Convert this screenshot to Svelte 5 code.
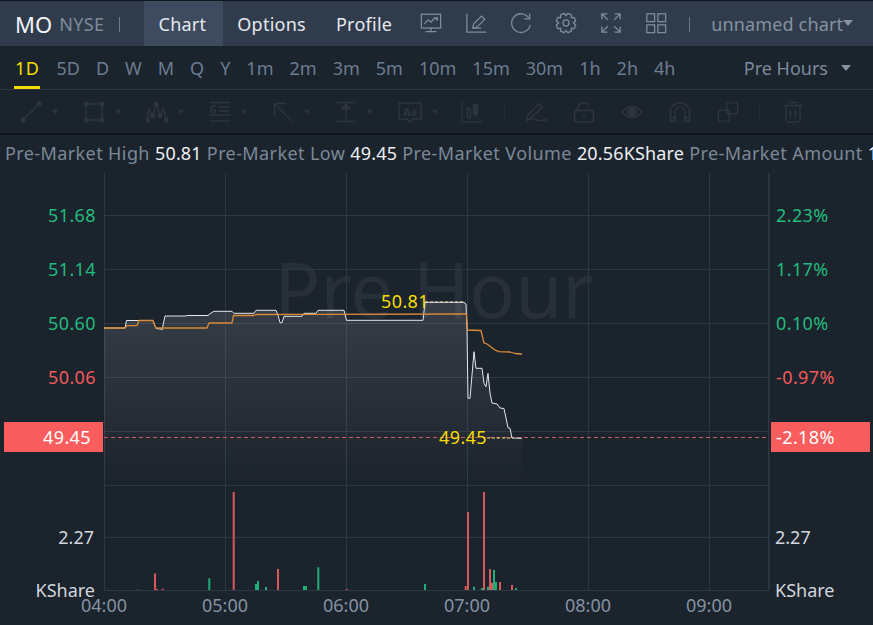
<script>
  const intervals = ['1D','5D','D','W','M','Q','Y','1m','2m','3m','5m','10m','15m','30m','1h','2h','4h'];

  const stats = [
    ['Pre-Market High', '50.81'],
    ['Pre-Market Low', '49.45'],
    ['Pre-Market Volume', '20.56KShare'],
    ['Pre-Market Amount', '1.03M']
  ];

  const priceAxis = [
    { y: 215, price: '51.68', pct: '2.23%', cls: 'up' },
    { y: 269, price: '51.14', pct: '1.17%', cls: 'up' },
    { y: 323, price: '50.60', pct: '0.10%', cls: 'up' },
    { y: 377, price: '50.06', pct: '-0.97%', cls: 'down' }
  ];

  const gridY = [215, 269, 323, 377, 431, 485, 537, 590];
  const times = [[104,'04:00'],[225,'05:00'],[346,'06:00'],[467,'07:00'],[588,'08:00'],[709,'09:00']];

  // traced from the session: [x, y]
  const last = [
    [104,328],[125,328],[126.5,320.5],[138,320.5],[153,320.5],[155,326],[156,328.5],[161,329],[162,330],
    [165,316],[186,316],[186.5,315.5],[208,315.5],[211,313],[214,311.3],[232,311.3],[234,313.3],[254,313.3],
    [256,310.3],[276,310.3],[278,315],[280,322.7],[282,322.7],[284,316.3],[302,316.3],[304,313.3],[316,313.3],
    [318,310.3],[344,310.3],[346.5,320.3],[423,320.3],[425,302.3],[464,302.3],[466,304],[467,330],[468,398.3],
    [470,398.3],[474,351.7],[476,368.3],[482,368.3],[484,383.3],[486,386.7],[488,373.3],[490,393],[492,403],
    [497,404],[500,408],[504,408.5],[508,427.7],[510,428.3],[512,438],[522,438.3]
  ];
  const avg = [
    [104,328],[125,328],[127,325.6],[137,325.6],[139,320.5],[153,320.5],[155,326],[156,328],[207,328],[209,323],
    [232,323],[233.5,315.5],[254,315.5],[256,314.5],[316,314.3],[465,314],[466.5,314],[467.5,330],[481,330.5],
    [484,343],[487,344],[495,350],[499,351.7],[510,352],[515,353.5],[522,354]
  ];
  const toPoints = (pts) => pts.map((p) => p.join(',')).join(' ');
  const areaPoints = toPoints(last) + ' 522,485 104,485';

  const bars = [
    [138,589,'flat'],[155,573.3,'r'],[157,589,'r'],[162.7,588.7,'r'],[209.3,578.3,'g'],[233.7,492,'r'],[256,584,'g'],
    [258,581,'g'],[266,587,'g'],[278,569,'r'],[304,586,'g'],[306,586,'g'],[318.3,567.3,'g'],[346.7,589,'r'],
    [425,584,'g'],[465.7,586,'r'],[468,512,'r'],[474,586.7,'g'],[482,588,'g'],[484,492,'r'],[488,586.7,'g'],
    [490,569,'r'],[492,582.7,'r'],[494,570,'g'],[496,582,'g'],[500,582,'r'],[512,585,'r'],[516,588,'g']
  ];

  // eight-tooth gear outline for the settings button
  const gear = Array.from({ length: 8 }, (_, i) => {
    const a = (i * Math.PI) / 4 + Math.PI / 8;
    const at = (r, d) => `${(12 + r * Math.cos(a + d)).toFixed(2)},${(12 + r * Math.sin(a + d)).toFixed(2)}`;
    return [at(8.2, -0.38), at(10.8, -0.2), at(10.8, 0.2), at(8.2, 0.38)].join(' ');
  }).join(' ');
</script>

<div class="page">
  <header class="topbar">
    <span class="symbol">MO</span>
    <span class="exchange">NYSE</span>
    <i class="sep first"></i>
    <nav class="tabs">
      <span class="tab active">Chart</span>
      <span class="tab">Options</span>
      <span class="tab">Profile</span>
    </nav>
    <div class="actions">
      <svg viewBox="0 0 24 24"><rect x="1.5" y="2.5" width="21" height="15"/><path d="M4.5 13l4.5-4.5 3 2.5 4-4.5 3 2M12 17.5v4M6 21.5h12M15 6.5h4v3"/></svg>
      <svg viewBox="0 0 24 24"><path d="M2 2v20h21M8.5 17.5l1-4.5L18 4.5l3.5 3.5-8.5 8.5zM8.5 17.5h9"/></svg>
      <svg viewBox="0 0 24 24"><path d="M20.5 6.5A10.2 10.2 0 1 0 22 14M21.5 1.5v6h-6"/></svg>
      <svg viewBox="0 0 24 24"><polygon points={gear}/><circle cx="12" cy="12" r="3.3"/></svg>
      <svg viewBox="0 0 24 24"><path d="M2 8V2h6M2 2l6.5 6.5M16 2h6v6M22 2l-6.5 6.5M2 16v6h6M2 22l6.5-6.5M22 16v6h-6M22 22l-6.5-6.5"/></svg>
      <svg viewBox="0 0 24 24"><rect x="2" y="2" width="8.5" height="8.5"/><rect x="14" y="2" width="8.5" height="8.5"/><rect x="2" y="14" width="8.5" height="8.5"/><rect x="14" y="14" width="8.5" height="8.5"/></svg>
    </div>
    <i class="sep"></i>
    <span class="chart-name">unnamed chart</span>
    <i class="caret light"></i>
  </header>

  <div class="intervals">
    {#each intervals as item, i}
      <span class="interval" class:selected={i === 0}>{item}</span>
    {/each}
    <span class="session">Pre Hours</span>
    <i class="caret session-caret"></i>
  </div>

  <div class="tools">
    <div class="tool"><svg viewBox="0 0 22 22"><path d="M3 19L19 3"/><circle cx="3" cy="19" r="1.8"/><circle cx="19" cy="3" r="1.8"/></svg><i class="caret small"></i></div>
    <div class="tool"><svg viewBox="0 0 22 22"><rect x="3" y="3" width="16" height="16"/><circle cx="3" cy="3" r="1.8"/><circle cx="19" cy="3" r="1.8"/><circle cx="3" cy="19" r="1.8"/><circle cx="19" cy="19" r="1.8"/></svg><i class="caret small"></i></div>
    <div class="tool"><svg viewBox="0 0 22 22"><path d="M1 19L3 8l3.7 6.5L10.3 3 14 14.5 17.7 8 20.3 19"/><circle cx="1.5" cy="19" r="1.8"/><circle cx="6.7" cy="14.5" r="1.8"/><circle cx="10.3" cy="3" r="1.8"/><circle cx="14" cy="14.5" r="1.8"/><circle cx="20.3" cy="19" r="1.8"/></svg><i class="caret small"></i></div>
    <div class="tool"><svg viewBox="0 0 22 22"><path d="M0.5 1.5h21M10 6h11M10 10h11M0.5 14h21M0.5 20h21"/><text x="0.5" y="12" class="tool-glyph">G</text></svg><i class="caret small"></i></div>
    <div class="tool"><svg viewBox="0 0 22 22"><path d="M2.5 2.5L20 20M2.5 2.5h12M2.5 2.5v12"/></svg><i class="caret small"></i></div>
    <div class="tool"><svg viewBox="0 0 22 22"><path d="M1.5 1.5h19M1.5 20.5h19M11 4v16"/><path class="solid" d="M11 3.5l4 4H7z"/></svg><i class="caret small"></i></div>
    <div class="tool"><svg class="wide" viewBox="0 0 24 22"><path d="M1 2h22v16h-8l-3 3-3-3H1z"/><text x="12" y="14.5" class="tool-glyph aa">Aa</text></svg><i class="caret small"></i></div>
    <div class="tool candle"><svg viewBox="0 0 22 22"><path d="M1 1v20h20"/><rect x="6" y="8" width="3.5" height="8"/><path d="M7.75 6v2M7.75 16v2M14.5 2v14"/><rect class="solid" x="12.5" y="4" width="4" height="9"/></svg></div>
    <i class="tool-sep"></i>
    <div class="tool-group">
      <svg viewBox="0 0 22 22"><path d="M2 15L14 2.5l3.5 3.5L5 18H2zM1 20c4-2 5-2.5 8-1.5s6 1.5 10 .5 1 1 2 1.5"/></svg>
      <svg viewBox="0 0 22 22"><rect x="1.5" y="9.5" width="19" height="11.5" rx="2.5"/><path d="M5 9.5V6.5a6 5 0 0 1 11-2.500M11 13.500v3"/></svg>
      <svg viewBox="0 0 24 22"><path d="M1 11c6-8 16-8 22 0-6 8-16 8-22 0z"/><circle class="solid" cx="12" cy="11" r="4.5"/></svg>
      <svg viewBox="0 0 22 22"><path d="M1.5 20.5V11a9.500 9.500 0 0 1 19 0v9.500h-4.500V11a5 5 0 0 0-10 0v9.500zM1.500 16.500H6M16 16.500h4.500"/></svg>
      <svg viewBox="0 0 24 22"><rect x="10.5" y="1" width="12" height="12" rx="2"/><rect x="1.5" y="9" width="12" height="12" rx="2"/></svg>
    </div>
    <i class="tool-sep last"></i>
    <svg class="trash" viewBox="0 0 22 22"><path d="M1 4.5h20M7 1.5h8M4 4.5v14a2.5 2.5 0 0 0 2.5 2.5h9a2.5 2.5 0 0 0 2.5-2.5v-14M8.5 9v7.5M13.5 9v7.5"/></svg>
  </div>

  <div class="stats">
    {#each stats as [label, value]}
      <span class="stat-label">{label}</span>{' '}<span class="stat-value">{value}</span>{' '}
    {/each}
  </div>

  <svg class="chart" viewBox="0 173 873 452">
    <defs>
      <linearGradient id="fade" x1="0" y1="0" x2="0" y2="1">
        <stop offset="0" stop-color="#fff" stop-opacity="0.12"/>
        <stop offset="1" stop-color="#fff" stop-opacity="0"/>
      </linearGradient>
    </defs>

    <text class="watermark" x="434" y="318" text-anchor="middle">Pre Hour</text>

    {#each gridY as y}
      <line class="grid" x1="104" x2="769" y1={y + 0.5} y2={y + 0.5}/>
    {/each}
    {#each times as [x]}
      <line class="grid" x1={x + 0.5} x2={x + 0.5} y1="173" y2="590"/>
    {/each}
    <line class="grid edge" x1="768.75" x2="768.75" y1="173" y2="590"/>

    <polygon points={areaPoints} fill="url(#fade)"/>
    <line class="limit" x1="104" x2="769" y1="437.5" y2="437.5"/>
    <line class="hi-lo" x1="425" x2="465" y1="302" y2="302"/>
    <polyline class="last" points={toPoints(last)}/>
    <polyline class="avg" points={toPoints(avg)}/>
    <line class="hi-lo" x1="487" x2="512" y1="438" y2="438"/>

    <text class="mark" x="381" y="308">50.81</text>
    <text class="mark" x="439" y="444">49.45</text>

    {#each bars as [x, top, kind]}
      <rect class="bar {kind}" x={x - 1} y={top} width="2" height={590 - top}/>
    {/each}

    {#each priceAxis as row}
      <text class="axis {row.cls}" x="96" y={row.y + 6.5} text-anchor="end">{row.price}</text>
      <text class="axis {row.cls}" x="776" y={row.y + 6.5}>{row.pct}</text>
    {/each}

    <rect class="flag" x="4" y="422" width="99" height="30"/>
    <text class="axis white" x="91" y="443.5" text-anchor="end">49.45</text>
    <rect class="flag" x="771" y="422" width="99" height="30"/>
    <text class="axis white" x="776" y="443.5">-2.18%</text>

    <text class="axis plain" x="94" y="543.5" text-anchor="end">2.27</text>
    <text class="axis plain" x="775" y="543.5">2.27</text>
    <text class="axis plain" x="95" y="596.5" text-anchor="end">KShare</text>
    <text class="axis plain" x="775" y="596.5">KShare</text>

    {#each times as [x, label]}
      <text class="time" {x} y="611.5" text-anchor="middle">{label}</text>
    {/each}
  </svg>
</div>

<style>
  :global(body) {
    margin: 0;
    background: #1b232d;
  }

  .page {
    width: 873px;
    height: 625px;
    overflow: hidden;
    background: #1b232d;
    font-family: "Noto Sans", "Open Sans", sans-serif;
    font-size: 18px;
  }

  .topbar {
    display: flex;
    align-items: center;
    height: 45px;
    border-top: 1px solid #12171d;
    background: #303c4c;
    padding-left: 15px;
  }

  .symbol {
    color: #f2f4f7;
    font-size: 22px;
  }

  .exchange {
    margin-left: 7px;
    color: #7e8a9a;
    letter-spacing: 0.4px;
  }

  .sep {
    width: 1px;
    height: 15px;
    margin: 2px 21px 0 22px;
    background: #6f7a8a;
  }

  .sep.first {
    margin: 2px 24px 0 14px;
  }

  .tabs {
    display: flex;
    align-self: stretch;
  }

  .tab {
    display: flex;
    align-items: center;
    padding: 0 15px;
    color: #e6e9ee;
    letter-spacing: 0.25px;
  }

  .tab.active {
    background: #3e4b5e;
    padding: 0 17px 0 15px;
    margin-right: -1px;
  }

  .actions {
    display: flex;
    gap: 23px;
    margin-left: 13px;
    margin-top: -1px;
  }

  .actions svg {
    width: 22px;
    height: 22px;
    fill: none;
    stroke: #7f8b9a;
    stroke-width: 1.4;
  }

  .chart-name {
    color: #8591a1;
    letter-spacing: 0.15px;
  }

  .caret {
    width: 0;
    height: 0;
    border-left: 5px solid transparent;
    border-right: 5px solid transparent;
    border-top: 6px solid #8591a1;
  }

  .caret.light {
    margin: -2px 0 0 0;
  }

  .caret.small {
    border-left-width: 3.5px;
    border-right-width: 3.5px;
    border-top: 4px solid #2d3540;
    margin-left: 10px;
  }

  .intervals {
    display: flex;
    align-items: center;
    gap: 16px;
    height: 43px;
    padding-left: 15px;
    border-bottom: 1px solid #2e3743;
    color: #6c7c91;
    box-sizing: content-box;
  }

  .interval {
    position: relative;
  }

  .interval.selected {
    color: #f5dc00;
    margin-right: 1px;
    letter-spacing: 0.5px;
  }

  .interval.selected::after {
    content: "";
    position: absolute;
    left: -1px;
    right: -1px;
    bottom: -9px;
    height: 3px;
    background: #f5dc00;
  }

  .session {
    margin-left: auto;
    color: #7c8a9c;
  }

  .session-caret {
    margin: 0 22px 0 -3px;
    border-top-color: #8591a1;
  }

  .tools {
    display: flex;
    align-items: center;
    height: 43px;
    padding-left: 20px;
    border-bottom: 2px solid #11161c;
  }

  .tool {
    display: flex;
    align-items: center;
    width: 63px;
  }

  .tools svg {
    width: 22px;
    height: 22px;
    flex: none;
    fill: none;
    stroke: #2d3540;
    stroke-width: 1.5;
  }

  .tools svg.wide {
    width: 24px;
  }

  .tool-glyph {
    font-size: 10px;
    font-weight: 700;
    fill: #2d3540;
    stroke: none;
  }

  .tool-glyph.aa {
    text-anchor: middle;
    font-size: 11px;
  }

  .tools .solid {
    fill: #2d3540;
  }

  .tools circle {
    fill: #2d3540;
  }

  .tool.candle {
    width: 43px;
  }

  .tool-sep {
    width: 1px;
    height: 22px;
    background: #222a35;
  }

  .tool-group {
    display: flex;
    gap: 26px;
    margin-left: 20px;
  }

  .tool-sep.last {
    margin-left: 20px;
  }

  .trash {
    margin-left: 22px;
  }

  .stats {
    height: 38px;
    line-height: 37px;
    padding-left: 5px;
    white-space: nowrap;
    overflow: hidden;
    color: #7c8897;
    letter-spacing: 0.4px;
  }

  .stat-value {
    color: #eef0f3;
    letter-spacing: 0.15px;
  }

  .chart {
    display: block;
    width: 873px;
    height: 452px;
  }

  .chart text {
    font-family: "Noto Sans", "Open Sans", sans-serif;
    font-size: 18px;
  }

  .chart .watermark {
    font-size: 76px;
    fill: #272f3a;
  }

  .grid {
    stroke: #2e3843;
    stroke-width: 1;
  }

  .grid.edge {
    stroke: #2e3844;
    stroke-width: 1.5;
  }

  .limit {
    stroke: #cf5a5e;
    stroke-width: 1;
    stroke-dasharray: 4 3;
  }

  .hi-lo {
    stroke: #f4e27a;
    stroke-width: 1;
    stroke-dasharray: 3 2;
  }

  polyline {
    fill: none;
    stroke-linejoin: round;
  }

  .last {
    stroke: #e4e6ea;
    stroke-width: 1;
  }

  .avg {
    stroke: #d98a3a;
    stroke-width: 1.3;
  }

  .chart .mark {
    fill: #f5dc00;
    letter-spacing: 0.4px;
  }

  .bar.r {
    fill: #d9565a;
  }

  .bar.g {
    fill: #1fae76;
  }

  .bar.flat {
    fill: #333c48;
  }

  .flag {
    fill: #f95d5d;
  }

  .chart .axis {
    letter-spacing: 0.4px;
  }

  .chart .axis.up {
    fill: #22bb7d;
  }

  .chart .axis.down {
    fill: #f05a5a;
  }

  .chart .axis.white {
    fill: #fff;
  }

  .chart .axis.plain {
    fill: #d2d6dc;
    letter-spacing: 0;
  }

  .chart .time {
    fill: #8592a2;
  }
</style>
